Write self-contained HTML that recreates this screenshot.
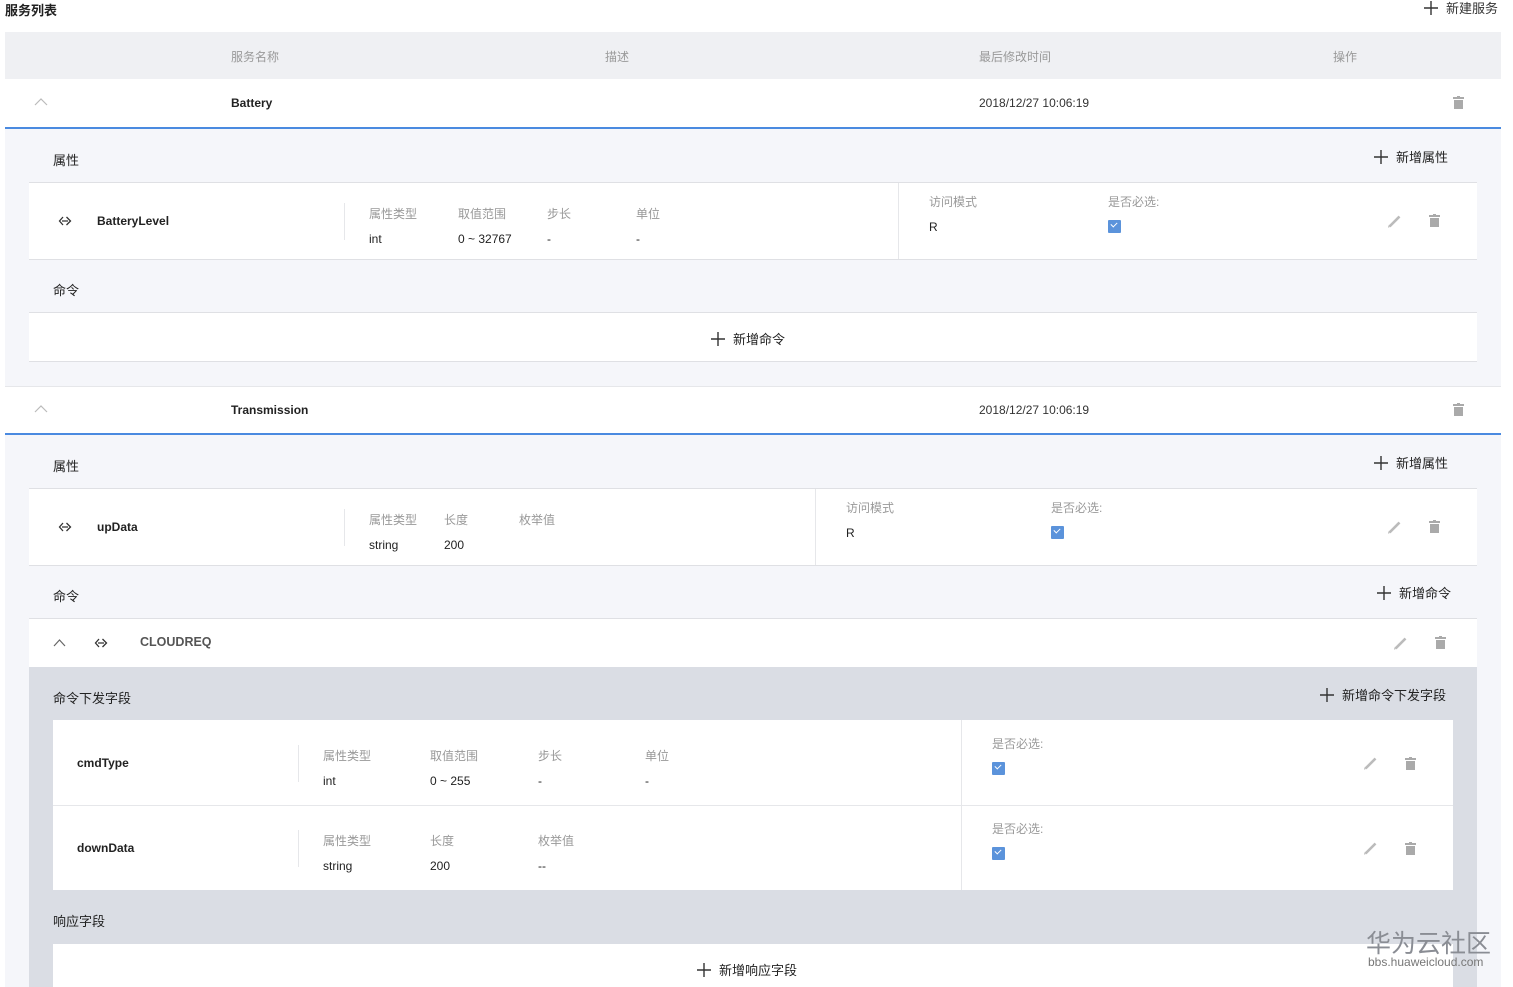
<!DOCTYPE html>
<html><head><meta charset="utf-8"><style>
*{margin:0;padding:0;box-sizing:border-box}
body{width:1513px;height:987px;overflow:hidden;background:#fff;position:relative;font-family:"Liberation Sans","Noto Sans CJK SC",sans-serif;color:#222;font-size:12px}
.a{position:absolute}
.g{color:#999}
.b{font-weight:bold}
.t{font-size:13px}
.vl{position:absolute;width:1px;background:#e6e7ea}
.cb{position:absolute;width:13px;height:13px;background:#5b93db;border-radius:1px}
.cb:after{content:"";position:absolute;left:3px;top:2px;width:5px;height:3px;border-left:1.5px solid #fff;border-bottom:1.5px solid #fff;transform:rotate(-45deg)}
.pl{position:absolute;white-space:nowrap;font-size:13px;color:#222}
.pl svg{vertical-align:-2px;margin-right:8px}
</style></head><body>
<svg width="0" height="0" style="position:absolute">
<defs>
<symbol id="p" viewBox="0 0 14 14"><path d="M7 0V14M0 7H14" stroke="#333" stroke-width="1.4"/></symbol>
<symbol id="d" viewBox="0 0 14 14"><path d="M5 3L1.5 7L5 11M8.5 3L12.5 7L8.5 11M4 7H10" fill="none" stroke="#333" stroke-width="1.3"/></symbol>
<symbol id="e" viewBox="0 0 16 16"><path d="M2.5 13.5L12.5 3.5" stroke="#bbb" stroke-width="2.6"/><path d="M1.5 14.5L2.5 12" stroke="#bbb" stroke-width="1.2"/></symbol>
<symbol id="r" viewBox="0 0 11 13"><rect x="0" y="1" width="11" height="2" fill="#aaa"/><rect x="4" y="0" width="3" height="2" fill="#aaa"/><rect x="1" y="4" width="9" height="9" fill="#aaa"/></symbol>
</defs></svg>
<div class="a b t" style="left:5px;top:0;font-size:13px">服务列表</div>
<div class="pl" style="left:1424px;top:-2px;color:#333"><svg width="14" height="14"><use href="#p"/></svg>新建服务</div>
<div class="a" style="left:5px;top:32px;width:1496px;height:47px;background:#eff0f3"></div>
<div class="a g" style="left:231px;top:48px">服务名称</div>
<div class="a g" style="left:605px;top:48px">描述</div>
<div class="a g" style="left:979px;top:48px">最后修改时间</div>
<div class="a g" style="left:1333px;top:48px">操作</div>

<div class="a" style="left:5px;top:127px;width:1496px;height:2px;background:#4a8ae0"></div>
<div class="a" style="left:5px;top:129px;width:1496px;height:257px;background:#f5f6fa"></div>
<svg class="a" style="left:34px;top:97px" width="14" height="9"><path d="M1 8L7 2L13 8" fill="none" stroke="#bbb" stroke-width="1.2"/></svg>
<div class="a b" style="left:231px;top:96px">Battery</div>
<div class="a" style="left:979px;top:96px;color:#333">2018/12/27 10:06:19</div>
<svg class="a" style="left:1453px;top:96px" width="11" height="13"><use href="#r"/></svg>
<div class="a t" style="left:53px;top:150px">属性</div>
<div class="pl" style="left:1374px;top:147px"><svg width="14" height="14"><use href="#p"/></svg>新增属性</div>
<div class="a" style="left:29px;top:182px;width:1448px;height:78px;background:#fff;border-top:1px solid #dfe0e4;border-bottom:1px solid #dfe0e4"></div>
<svg class="a" style="left:58px;top:214px" width="14" height="14"><use href="#d"/></svg>
<div class="a b" style="left:97px;top:214px">BatteryLevel</div>
<div class="vl" style="left:344px;top:203px;height:37px"></div>
<div class="a g" style="left:369px;top:205px">属性类型</div><div class="a" style="left:369px;top:232px">int</div>
<div class="a g" style="left:458px;top:205px">取值范围</div><div class="a" style="left:458px;top:232px">0 ~ 32767</div>
<div class="a g" style="left:547px;top:205px">步长</div><div class="a" style="left:547px;top:232px">-</div>
<div class="a g" style="left:636px;top:205px">单位</div><div class="a" style="left:636px;top:232px">-</div>
<div class="vl" style="left:898px;top:183px;height:76px"></div>
<div class="a g" style="left:929px;top:193px">访问模式</div><div class="a" style="left:929px;top:220px">R</div>
<div class="a g" style="left:1108px;top:193px">是否必选:</div><div class="cb" style="left:1108px;top:220px"></div>
<svg class="a" style="left:1387px;top:213px" width="16" height="16"><use href="#e"/></svg>
<svg class="a" style="left:1429px;top:214px" width="11" height="13"><use href="#r"/></svg>
<div class="a t" style="left:53px;top:280px">命令</div>
<div class="a" style="left:29px;top:312px;width:1448px;height:50px;background:#fff;border-top:1px solid #dfe0e4;border-bottom:1px solid #dfe0e4"></div>
<div class="pl" style="left:711px;top:329px"><svg width="14" height="14"><use href="#p"/></svg>新增命令</div>

<div class="a" style="left:5px;top:386px;width:1496px;height:1px;background:#e6e7ea"></div>
<svg class="a" style="left:34px;top:404px" width="14" height="9"><path d="M1 8L7 2L13 8" fill="none" stroke="#bbb" stroke-width="1.2"/></svg>
<div class="a b" style="left:231px;top:403px">Transmission</div>
<div class="a" style="left:979px;top:403px;color:#333">2018/12/27 10:06:19</div>
<svg class="a" style="left:1453px;top:403px" width="11" height="13"><use href="#r"/></svg>
<div class="a" style="left:5px;top:433px;width:1496px;height:2px;background:#4a8ae0"></div>
<div class="a" style="left:5px;top:435px;width:1496px;height:552px;background:#f5f6fa"></div>
<div class="a t" style="left:53px;top:456px">属性</div>
<div class="pl" style="left:1374px;top:453px"><svg width="14" height="14"><use href="#p"/></svg>新增属性</div>
<div class="a" style="left:29px;top:488px;width:1448px;height:78px;background:#fff;border-top:1px solid #dfe0e4;border-bottom:1px solid #dfe0e4"></div>
<svg class="a" style="left:58px;top:520px" width="14" height="14"><use href="#d"/></svg>
<div class="a b" style="left:97px;top:520px">upData</div>
<div class="vl" style="left:344px;top:509px;height:37px"></div>
<div class="a g" style="left:369px;top:511px">属性类型</div><div class="a" style="left:369px;top:538px">string</div>
<div class="a g" style="left:444px;top:511px">长度</div><div class="a" style="left:444px;top:538px">200</div>
<div class="a g" style="left:519px;top:511px">枚举值</div>
<div class="vl" style="left:815px;top:489px;height:76px"></div>
<div class="a g" style="left:846px;top:499px">访问模式</div><div class="a" style="left:846px;top:526px">R</div>
<div class="a g" style="left:1051px;top:499px">是否必选:</div><div class="cb" style="left:1051px;top:526px"></div>
<svg class="a" style="left:1387px;top:519px" width="16" height="16"><use href="#e"/></svg>
<svg class="a" style="left:1429px;top:520px" width="11" height="13"><use href="#r"/></svg>
<div class="a t" style="left:53px;top:586px">命令</div>
<div class="pl" style="left:1377px;top:583px"><svg width="14" height="14"><use href="#p"/></svg>新增命令</div>
<div class="a" style="left:29px;top:618px;width:1448px;height:50px;background:#fff;border-top:1px solid #dfe0e4"></div>
<svg class="a" style="left:53px;top:638px" width="13" height="9"><path d="M1 8L6.5 2L12 8" fill="none" stroke="#666" stroke-width="1.2"/></svg>
<svg class="a" style="left:94px;top:636px" width="14" height="14"><use href="#d"/></svg>
<div class="a b" style="left:140px;top:635px;color:#555;font-size:12.5px">CLOUDREQ</div>
<svg class="a" style="left:1393px;top:635px" width="16" height="16"><use href="#e"/></svg>
<svg class="a" style="left:1435px;top:636px" width="11" height="13"><use href="#r"/></svg>
<div class="a" style="left:29px;top:667px;width:1448px;height:320px;background:#dadde4"></div>
<div class="a t" style="left:53px;top:688px">命令下发字段</div>
<div class="pl" style="left:1320px;top:685px"><svg width="14" height="14"><use href="#p"/></svg>新增命令下发字段</div>
<div class="a" style="left:53px;top:720px;width:1400px;height:170px;background:#fff"></div>
<div class="a" style="left:53px;top:805px;width:1400px;height:1px;background:#e6e7ea"></div>
<div class="a b" style="left:77px;top:756px">cmdType</div>
<div class="vl" style="left:298px;top:745px;height:37px"></div>
<div class="a g" style="left:323px;top:747px">属性类型</div><div class="a" style="left:323px;top:774px">int</div>
<div class="a g" style="left:430px;top:747px">取值范围</div><div class="a" style="left:430px;top:774px">0 ~ 255</div>
<div class="a g" style="left:538px;top:747px">步长</div><div class="a" style="left:538px;top:774px">-</div>
<div class="a g" style="left:645px;top:747px">单位</div><div class="a" style="left:645px;top:774px">-</div>
<div class="vl" style="left:961px;top:720px;height:170px"></div>
<div class="a g" style="left:992px;top:735px">是否必选:</div><div class="cb" style="left:992px;top:762px"></div>
<svg class="a" style="left:1363px;top:755px" width="16" height="16"><use href="#e"/></svg>
<svg class="a" style="left:1405px;top:757px" width="11" height="13"><use href="#r"/></svg>
<div class="a b" style="left:77px;top:841px">downData</div>
<div class="vl" style="left:298px;top:830px;height:37px"></div>
<div class="a g" style="left:323px;top:832px">属性类型</div><div class="a" style="left:323px;top:859px">string</div>
<div class="a g" style="left:430px;top:832px">长度</div><div class="a" style="left:430px;top:859px">200</div>
<div class="a g" style="left:538px;top:832px">枚举值</div><div class="a" style="left:538px;top:859px">--</div>
<div class="a g" style="left:992px;top:820px">是否必选:</div><div class="cb" style="left:992px;top:847px"></div>
<svg class="a" style="left:1363px;top:840px" width="16" height="16"><use href="#e"/></svg>
<svg class="a" style="left:1405px;top:842px" width="11" height="13"><use href="#r"/></svg>
<div class="a t" style="left:53px;top:911px">响应字段</div>
<div class="a" style="left:53px;top:944px;width:1400px;height:43px;background:#fff"></div>
<div class="pl" style="left:697px;top:960px"><svg width="14" height="14"><use href="#p"/></svg>新增响应字段</div>
<div class="a" style="left:1366px;top:924px;font-size:25px;color:#8a8d94">华为云社区</div>
<div class="a" style="left:1368px;top:955px;font-size:12px;color:#777">bbs.huaweicloud.com</div>
</body></html>
